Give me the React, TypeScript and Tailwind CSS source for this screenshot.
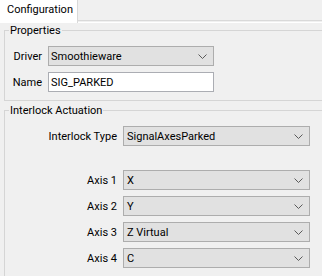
import React from "react";

function Chevron() {
  return (
    <svg width="9" height="5" viewBox="0 0 9 5" className="shrink-0">
      <polyline points="0.5,0.5 4.5,4.5 8.5,0.5" fill="none" stroke="#5a5a5a" strokeWidth="1" />
    </svg>
  );
}

function Combo({ value, w, pl }: { value: string; w: string; pl: string }) {
  return (
    <div className={`${w} h-[20px] bg-[#e1e1e1] border border-[#adadad] flex items-center justify-between ${pl} pr-[6px]`}>
      <span className="leading-[13px]">{value}</span>
      <Chevron />
    </div>
  );
}

function Legend({ text }: { text: string }) {
  return (
    <div className="absolute left-[4px] top-[-7px] bg-[#f0f0f0] px-[1px] leading-[13px]">{text}</div>
  );
}

export default function App() {
  const axes: [string, string][] = [
    ["Axis 1", "X"],
    ["Axis 2", "Y"],
    ["Axis 3", "Z Virtual"],
    ["Axis 4", "C"],
  ];
  return (
    <div
      className="w-[322px] h-[276px] bg-[#f0f0f0] overflow-hidden text-[11px] text-black"
      style={{ fontFamily: "Roboto, 'Liberation Sans', sans-serif" }}
    >
      {/* tab strip */}
      <div className="flex h-[23px]">
        <div className="w-[78px] bg-white border-r border-[#d9d9d9] pl-[7px] pt-[3px] leading-[13px]">
          Configuration
        </div>
        <div className="flex-1 flex flex-col">
          <div className="h-[21px] border-b border-[#d9d9d9]" />
          <div className="h-[1px]" />
          <div className="h-[1px] bg-white" />
        </div>
      </div>

      <div className="pl-[4px] flex flex-col">
        {/* Properties */}
        <div className="relative mt-[7px] w-[330px] h-[71px] border border-[#d5d5d5] pt-[15px]">
          <Legend text="Properties" />
          <div className="grid grid-cols-[37px_166px] gap-x-[6px] gap-y-[6px] items-center">
            <div className="text-right leading-[13px]">Driver</div>
            <Combo value="Smoothieware" w="w-[166px]" pl="pl-[2px]" />
            <div className="text-right leading-[13px]">Name</div>
            <div className="w-[166px] h-[20px] bg-white border border-[#abadb3] flex items-center pl-[2px]">
              <span className="leading-[13px]">SIG_PARKED</span>
            </div>
          </div>
        </div>

        {/* Interlock Actuation */}
        <div className="relative mt-[9px] w-[330px] h-[180px] border border-[#d5d5d5] pt-[15px]">
          <Legend text="Interlock Actuation" />
          <div className="grid grid-cols-[112px_187px] gap-x-[6px] items-center">
            <div className="text-right leading-[13px]">Interlock Type</div>
            <Combo value="SignalAxesParked" w="w-[187px]" pl="pl-[3px]" />
          </div>
          <div className="mt-[24px] grid grid-cols-[112px_187px] gap-x-[6px] gap-y-[6px] items-center">
            {axes.map(([label, value]) => (
              <React.Fragment key={label}>
                <div className="text-right leading-[13px]">{label}</div>
                <Combo value={value} w="w-[187px]" pl="pl-[3px]" />
              </React.Fragment>
            ))}
          </div>
        </div>
      </div>
    </div>
  );
}
